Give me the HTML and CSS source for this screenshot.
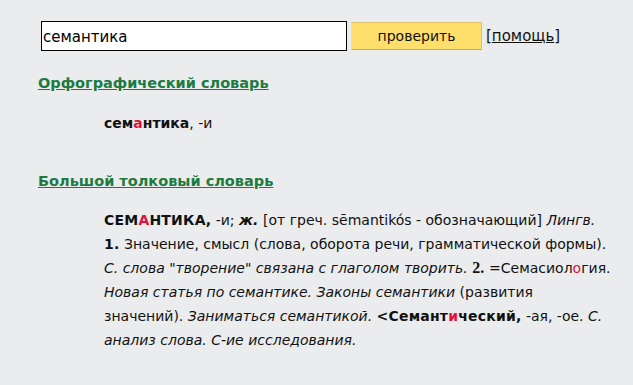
FILE: index.html
```html
<!DOCTYPE html>
<html>

<head>
    <title>Проверка слова</title>
    <link rel="stylesheet" href="styles.css">
</head>

<body>
    <div class="content">
        <form class="search" onsubmit="return false;">
            <input type="text" class="word" name="word" value="семантика">
            <input type="submit" class="check" value="проверить">
            <span class="help">[<a href="#">помощь</a>]</span>
        </form>

        <h2><a href="#">Орфографический словарь</a></h2>
        <div class="entry">
            <b>сем<span class="accent">а</span>нтика</b>, -и
        </div>

        <h2 class="second"><a href="#">Большой толковый словарь</a></h2>
        <div class="entry long">
            <b>СЕМ<span class="accent">А</span>НТИКА,</b> -и; <b><i>ж.</i></b> [от греч. sēmantikós - обозначающий] <i>Лингв.</i><br>
            <b>1.</b> Значение, смысл (слова, оборота речи, грамматической формы).<br>
            <i>С. слова "творение" связана с глаголом творить.</i> <b class="num">2.</b> =Семасиол<span class="accent">о</span>гия.<br>
            <i>Новая статья по семантике. Законы семантики</i> (развития<br>
            значений). <i>Заниматься семантикой.</i> <b>&lt;Семант<span class="accent">и</span>ческий,</b> -ая, -ое. <i>С.</i><br>
            <i>анализ слова. С-ие исследования.</i>
        </div>
    </div>
</body>

</html>
```

FILE: styles.css
```css
body {
    margin: 0;
    background-color: #ebecee;
    color: #111111;
    font-family: "DejaVu Sans", Verdana, sans-serif;
    font-size: 14px;
}

.content {
    padding: 21px 12px 20px 38px;
}

.search {
    display: flex;
    align-items: flex-start;
    margin-left: 3px;
}

.word {
    width: 306px;
    height: 30px;
    box-sizing: border-box;
    border: 1px solid #000000;
    padding: 2px 2px 0 1px;
    font-family: inherit;
    font-size: 15px;
    color: #000000;
    background: #ffffff;
}

.check {
    width: 131px;
    height: 28px;
    margin: 1px 0 0 4px;
    border: 1px solid #dcc06a;
    border-left-color: #f4e3a0;
    border-bottom-color: #c9aa4c;
    background-color: #ffdf6b;
    font-family: inherit;
    font-size: 14px;
    color: #111111;
}

.help {
    margin: 6px 0 0 4px;
    font-size: 15px;
}

.help a {
    color: #111111;
}

h2 {
    font-size: 14.5px;
    margin: 24px 0 0 0;
}

h2.second {
    margin-top: 42px;
}

h2 a {
    color: #1b7b40;
}

.entry {
    margin: 24px 0 0 66px;
    font-size: 14px;
}

.entry.long {
    margin-top: 19px;
    line-height: 24px;
    white-space: nowrap;
}

.entry.long b {
    letter-spacing: 0.2px;
}

.accent {
    color: #e3103c;
}

.num {
    font-family: "Liberation Serif", serif;
    font-size: 16px;
    line-height: 1;
}
```
